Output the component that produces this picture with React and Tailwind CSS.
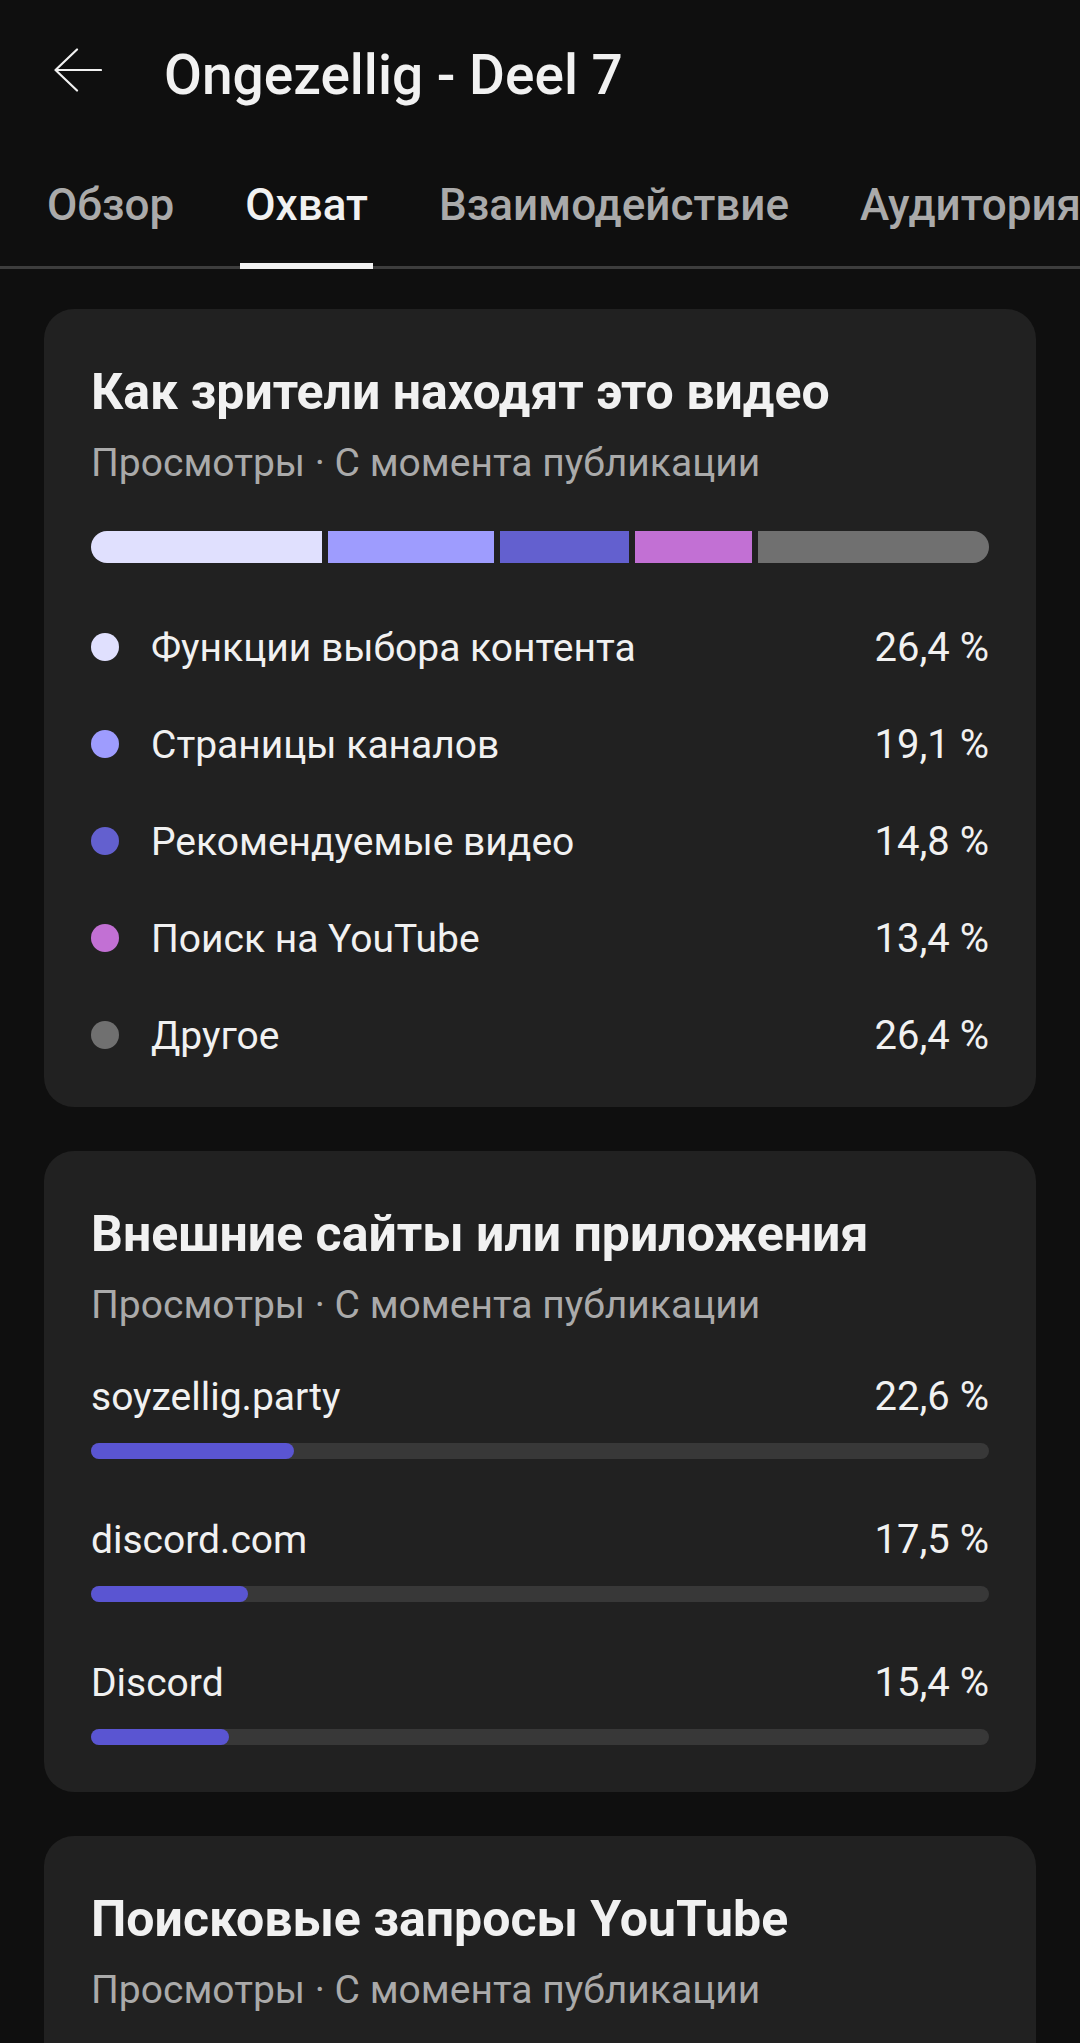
import React from "react";

const sources = [
  { label: "Функции выбора контента", pct: 26.4, color: "bg-[#e0e0fe]" },
  { label: "Страницы каналов", pct: 19.1, color: "bg-[#9e9cfe]" },
  { label: "Рекомендуемые видео", pct: 14.8, color: "bg-[#6360cf]" },
  { label: "Поиск на YouTube", pct: 13.4, color: "bg-[#c270d4]" },
  { label: "Другое", pct: 26.4, color: "bg-[#707070]" },
];

const sites = [
  { label: "soyzellig.party", pct: 22.6 },
  { label: "discord.com", pct: 17.5 },
  { label: "Discord", pct: 15.4 },
];

const tabs = ["Обзор", "Охват", "Взаимодействие", "Аудитория"];

function fmt(n) {
  return n.toFixed(1).replace(".", ",") + " %";
}

function CardHeader({ title }) {
  return (
    <>
      <h2 className="text-[50px] leading-[60px] font-bold text-[#f1f1f1]">{title}</h2>
      <p className="mt-[19px] text-[39px] leading-[44px] text-[#aaaaaa]">
        Просмотры · С момента публикации
      </p>
    </>
  );
}

export default function App() {
  return (
    <div className="w-[1080px] h-[2043px] overflow-hidden bg-[#0f0f0f] font-[family-name:Roboto,sans-serif]">
      {/* header */}
      <div className="flex items-start pl-[54px] pt-[42px]">
        <svg
          className="mt-[6px] w-[48px] h-[44px] shrink-0"
          viewBox="0 0 48 44"
          fill="none"
          stroke="#f1f1f1"
          strokeWidth="2.2"
          strokeLinecap="round"
          strokeLinejoin="round"
        >
          <path d="M1.5 22H47M23 1.5L1.5 22L23 42.5" />
        </svg>
        <h1 className="ml-[62px] text-[55px] leading-[66px] font-medium text-[#f1f1f1] whitespace-nowrap">
          Ongezellig - Deel 7
        </h1>
      </div>

      {/* tabs */}
      <div className="mt-[71px] flex items-end gap-[71px] pl-[47px] border-b-[3px] border-[#3d3d3d] whitespace-nowrap">
        {tabs.map((t, i) => (
          <div key={t} className="flex flex-col shrink-0">
            <span
              className={
                i === 1
                  ? "text-[44px] leading-[52px] font-medium text-[#f1f1f1]"
                  : "text-[44px] leading-[52px] font-medium text-[#aaaaaa]"
              }
            >
              {t}
            </span>
            <div className={i === 1 ? "mt-[32px] h-[6px] -mb-[3px] -mx-[5px] bg-[#f1f1f1]" : "mt-[32px] h-[6px] -mb-[3px]"} />
          </div>
        ))}
      </div>

      {/* cards */}
      <div className="flex flex-col gap-[44px] px-[44px] pt-[40px]">
        <div className="rounded-[30px] bg-[#212121] px-[47px] pt-[53px] pb-[47px]">
          <CardHeader title="Как зрители находят это видео" />
          <div className="mt-[46px] flex h-[32px] gap-[6px] overflow-hidden rounded-full">
            {sources.map((s) => (
              <div key={s.label} className={s.color} style={{ flexGrow: s.pct, flexBasis: 0 }} />
            ))}
          </div>
          <div className="mt-[61px] flex flex-col gap-[49px]">
            {sources.map((s) => (
              <div key={s.label} className="flex h-[48px] items-center">
                <div className={`w-[28px] h-[28px] rounded-full shrink-0 -mt-[3px] ${s.color}`} />
                <span className="ml-[32px] flex-1 text-[39px] leading-[48px] text-[#f1f1f1]">{s.label}</span>
                <span className="text-[40px] leading-[48px] text-[#f1f1f1]">{fmt(s.pct)}</span>
              </div>
            ))}
          </div>
        </div>

        <div className="rounded-[30px] bg-[#212121] px-[47px] pt-[53px] pb-[47px]">
          <CardHeader title="Внешние сайты или приложения" />
          <div className="mt-[46px] flex flex-col gap-[57px]">
            {sites.map((s) => (
              <div key={s.label}>
                <div className="flex items-center justify-between leading-[48px] text-[#f1f1f1]">
                  <span className="text-[39px]">{s.label}</span>
                  <span className="text-[40px]">{fmt(s.pct)}</span>
                </div>
                <div className="mt-[22px] h-[16px] rounded-full bg-[#383838]">
                  <div className="h-full rounded-full bg-[#5a55d2]" style={{ width: `${s.pct}%` }} />
                </div>
              </div>
            ))}
          </div>
        </div>

        <div className="rounded-[30px] bg-[#212121] px-[47px] pt-[53px] h-[400px]">
          <CardHeader title="Поисковые запросы YouTube" />
        </div>
      </div>
    </div>
  );
}
